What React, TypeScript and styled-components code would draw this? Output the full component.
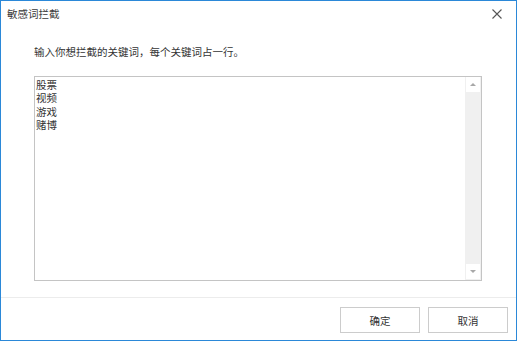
import React from 'react';
import styled, { createGlobalStyle } from 'styled-components';

const GlobalStyle = createGlobalStyle`
	html, body {
		margin: 0;
		padding: 0;
		background: #ffffff;
	}
	* {
		box-sizing: border-box;
	}
`;

const Window = styled.div`
	width: 517px;
	height: 341px;
	display: flex;
	flex-direction: column;
	border: 1px solid #2b88d8;
	background: #ffffff;
	font-family: 'Noto Sans CJK SC', 'Microsoft YaHei', sans-serif;
	font-size: 10.5px;
	color: #333333;
`;

const TitleBar = styled.div`
	height: 25px;
	display: flex;
	align-items: center;
	justify-content: space-between;
	padding: 0 14px 0 6px;
`;

const Title = styled.span`
	line-height: 14px;
	color: #3a3a3a;
`;

const CloseButton = styled.button`
	width: 11px;
	height: 11px;
	padding: 0;
	border: none;
	background: transparent;
	display: flex;
	align-items: center;
	justify-content: center;
	cursor: pointer;
`;

const Body = styled.div`
	flex: 1;
	display: flex;
	flex-direction: column;
	padding: 19px 34px 16px 33px;
`;

const Hint = styled.p`
	margin: 0 0 17px;
	line-height: 14px;
`;

const Editor = styled.div`
	height: 205px;
	display: flex;
	border: 1px solid #c4c4c4;
	background: #ffffff;
`;

const Input = styled.textarea`
	flex: 1;
	border: none;
	outline: none;
	resize: none;
	overflow: hidden;
	padding: 1px 1px;
	margin: 0;
	font-family: inherit;
	font-size: 10.5px;
	line-height: 13.4px;
	color: #333333;
	background: transparent;
`;

const Scrollbar = styled.div`
	width: 16px;
	display: flex;
	flex-direction: column;
	justify-content: space-between;
	background: #f0f0f0;
	padding: 0 1px 1px 1px;
`;

const ScrollArrow = styled.div`
	height: 15px;
	display: flex;
	align-items: center;
	justify-content: center;
	background: #ffffff;
`;

type ArrowProps = {
	$dir: 'up' | 'down';
};
const Triangle = styled.span<ArrowProps>`
	width: 0;
	height: 0;
	border-left: 3px solid transparent;
	border-right: 3px solid transparent;
	${(props) =>
		props.$dir === 'up'
			? 'border-bottom: 3px solid #a8a8a8;'
			: 'border-top: 3px solid #a8a8a8;'}
`;

const Footer = styled.div`
	height: 43px;
	display: flex;
	justify-content: flex-end;
	gap: 8px;
	padding: 9px 8px 7px;
	border-top: 1px solid #ececec;
`;

const Button = styled.button`
	width: 80px;
	height: 26px;
	border: 1px solid #cccccc;
	background: #ffffff;
	font-family: inherit;
	font-size: 10.5px;
	color: #333333;
	padding: 0;
	cursor: pointer;
`;

const keywords = ['股票', '视频', '游戏', '赌博'];

const App = () => {
	return (
		<>
			<GlobalStyle />
			<Window>
				<TitleBar>
					<Title>敏感词拦截</Title>
					<CloseButton aria-label="关闭">
						<svg width="10" height="10" viewBox="0 0 10 10">
							<path d="M0.5 0.5 L9.5 9.5 M9.5 0.5 L0.5 9.5" stroke="#555" strokeWidth="1.1" />
						</svg>
					</CloseButton>
				</TitleBar>
				<Body>
					<Hint>输入你想拦截的关键词，每个关键词占一行。</Hint>
					<Editor>
						<Input defaultValue={keywords.join('\n')} spellCheck={false} />
						<Scrollbar>
							<ScrollArrow>
								<Triangle $dir="up" />
							</ScrollArrow>
							<ScrollArrow>
								<Triangle $dir="down" />
							</ScrollArrow>
						</Scrollbar>
					</Editor>
				</Body>
				<Footer>
					<Button>确定</Button>
					<Button>取消</Button>
				</Footer>
			</Window>
		</>
	);
};

export default App;
